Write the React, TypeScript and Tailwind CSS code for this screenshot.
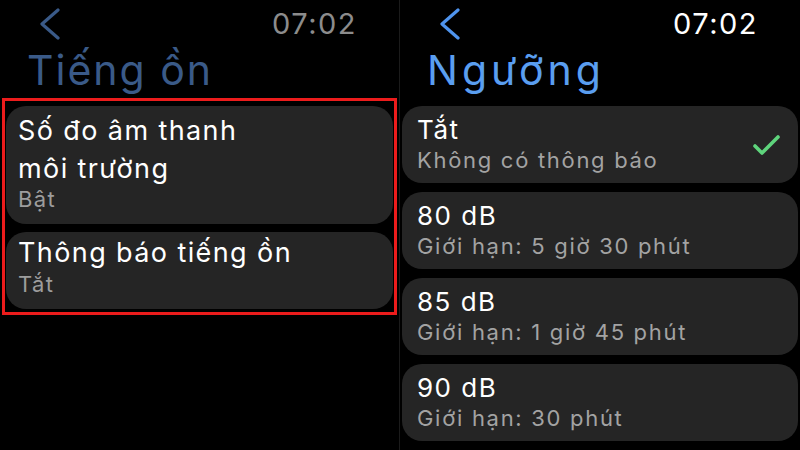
import React from "react";

type Row = { title: string; detail: string; checked?: boolean };

const thresholds: Row[] = [
  { title: "Tắt", detail: "Không có thông báo", checked: true },
  { title: "80 dB", detail: "Giới hạn: 5 giờ 30 phút" },
  { title: "85 dB", detail: "Giới hạn: 1 giờ 45 phút" },
  { title: "90 dB", detail: "Giới hạn: 30 phút" },
];

function Chevron({ color }: { color: string }) {
  return (
    <svg width="22" height="32" viewBox="0 0 22 32" fill="none">
      <polyline
        points="18,2 2,16 18,30"
        stroke={color}
        strokeWidth="3.2"
        strokeLinecap="round"
        strokeLinejoin="round"
      />
    </svg>
  );
}

function Check() {
  return (
    <svg width="30" height="24" viewBox="0 0 30 24" fill="none">
      <polyline
        points="3,13 10,20 26,4"
        stroke="#5ed47c"
        strokeWidth="3.6"
        strokeLinecap="round"
        strokeLinejoin="round"
      />
    </svg>
  );
}

function Header({ back, time }: { back: string; time: string }) {
  return (
    <div className="flex h-[45px] items-center justify-between pl-[40px] pr-[42px] pt-[2px]">
      <Chevron color={back} />
      <span className={`text-[29px] leading-none tracking-[1.5px] ${time}`}>07:02</span>
    </div>
  );
}

export default function App() {
  return (
    <div
      className="flex h-[450px] w-[800px] overflow-hidden bg-black text-white"
      style={{ fontFamily: "Inter, 'Noto Sans', sans-serif" }}
    >
      {/* noise settings screen, dimmed behind */}
      <div className="flex w-[399px] flex-col">
        <Header back="#3a5a88" time="text-[#8c8c8c]" />
        <h1 className="h-[53px] pl-[27px] text-[41px] leading-[50px] tracking-[2px] text-[#3a5a88]">Tiếng ồn</h1>
        <div className="mx-[2px] flex flex-col gap-[8px] border-[3px] border-[#ec1c1c] px-[1px] pb-[3px] pt-[5px]">
          <div className="flex h-[118px] flex-col rounded-[20px] bg-[#252525] px-[12px] pt-[5px] tracking-[1.4px]">
            <span className="text-[27px] leading-[39px]">Số đo âm thanh</span>
            <span className="text-[27px] leading-[37px]">môi trường</span>
            <span className="text-[22px] leading-[25px] text-[#9d9d9d]">Bật</span>
          </div>
          <div className="flex h-[77px] flex-col rounded-[20px] bg-[#252525] px-[12px] pt-[2px] tracking-[1.4px]">
            <span className="text-[27px] leading-[37px]">Thông báo tiếng ồn</span>
            <span className="text-[22px] leading-[27px] text-[#9d9d9d]">Tắt</span>
          </div>
        </div>
      </div>

      <div className="w-px bg-[#1b1b1b]" />

      {/* threshold picker */}
      <div className="flex flex-1 flex-col">
        <Header back="#4f94ee" time="text-white" />
        <h1 className="h-[61px] pl-[27px] text-[41px] leading-[50px] tracking-[4px] text-[#5a9ef0]">Ngưỡng</h1>
        <div className="flex flex-col gap-[9px] px-[2px]">
          {thresholds.map((row) => (
            <div
              key={row.title}
              className="flex h-[77px] items-center justify-between rounded-[20px] bg-[#252525] pl-[15px] pr-[16px]"
            >
              <div className="flex flex-col pb-[2px]">
                <span className="text-[26px] leading-[32px] tracking-[1.5px]">{row.title}</span>
                <span className="text-[22px] leading-[28px] tracking-[1.7px] text-[#a3a3a3]">{row.detail}</span>
              </div>
              {row.checked && <Check />}
            </div>
          ))}
        </div>
      </div>
    </div>
  );
}
